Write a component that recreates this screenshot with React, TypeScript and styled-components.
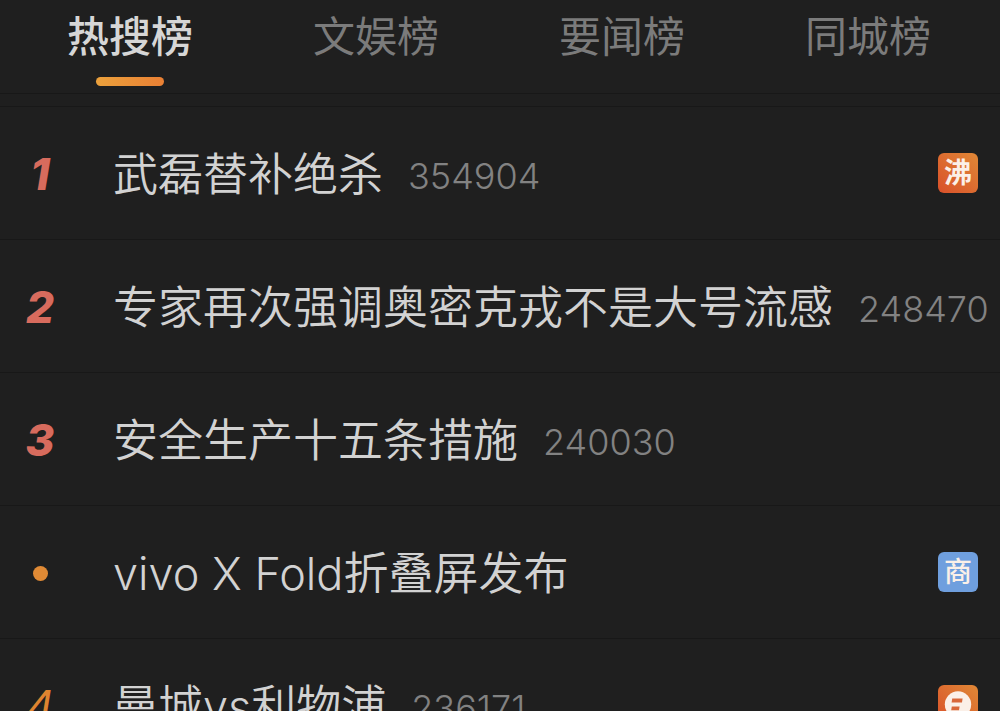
import React, { useState } from "react";
import styled, { createGlobalStyle, css } from "styled-components";

const Global = createGlobalStyle`
  * { box-sizing: border-box; }
  body {
    margin: 0;
    background: #1f1f1f;
    font-family: Inter, "Noto Sans CJK SC", sans-serif;
  }
`;

const Page = styled.main`
  display: flex;
  flex-direction: column;
  height: 100vh;
  overflow: hidden;
  background: #1f1f1f;
  color: #d2d2d2;
`;

const Tabs = styled.nav`
  display: grid;
  grid-template-columns: repeat(4, 1fr);
  flex: none;
  height: 94px;
  padding: 0 9px 0 7px;
  border-bottom: 1px solid #181818;
`;

const Tab = styled.button<{ $active: boolean }>`
  display: flex;
  flex-direction: column;
  align-items: center;
  gap: 8px;
  padding: 5px 0 0;
  border: 0;
  background: none;
  color: ${(p) => (p.$active ? "#d6d6d6" : "#7b7b7b")};
  font-family: inherit;
  font-size: 42px;
  font-weight: ${(p) => (p.$active ? 500 : 400)};
  line-height: 64px;
  cursor: pointer;

  &::after {
    content: "";
    width: 68px;
    height: 9px;
    border-radius: 5px;
    background: ${(p) => (p.$active ? "linear-gradient(90deg, #eba13c, #ea8034)" : "none")};
  }
`;

const List = styled.ol`
  flex: none;
  margin: 12px 0 0;
  padding: 0;
  list-style: none;
  border-top: 1px solid #181818;
`;

const Row = styled.li`
  display: flex;
  align-items: center;
  height: 133px;
  padding-right: 22px;
  border-bottom: 1px solid #181818;
`;

const Rank = styled.span<{ $top: boolean }>`
  display: flex;
  justify-content: center;
  flex: none;
  width: 80px;
  margin-right: 33px;
  padding-top: 2px;
  font-size: 44px;
  font-style: italic;
  line-height: 64px;
  ${(p) =>
    p.$top
      ? css`
          color: #d76b5d;
          font-weight: 800;
        `
      : css`
          color: #de8430;
          font-weight: 400;
        `}
`;

const Dot = styled.span`
  width: 15px;
  height: 15px;
  border-radius: 50%;
  background: #e08a35;
`;

const Topic = styled.a`
  display: flex;
  align-items: center;
  gap: 25px;
  flex: none;
  padding-top: 3px;
  color: inherit;
  text-decoration: none;
  white-space: nowrap;
`;

const Title = styled.span`
  font-size: 45px;
  font-weight: 350;
  line-height: 64px;
`;

const Count = styled.span`
  padding-top: 2px;
  color: #828282;
  font-size: 36px;
  font-weight: 300;
  line-height: 64px;
`;

const Badge = styled.span<{ $tone: "hot" | "ad" }>`
  display: flex;
  align-items: center;
  justify-content: center;
  flex: none;
  width: 40px;
  height: 40px;
  margin-left: auto;
  border-radius: 6px;
  color: #fbf0e8;
  font-size: 28px;
  line-height: 40px;
  ${(p) =>
    p.$tone === "hot"
      ? css`
          background: linear-gradient(45deg, #d9502a, #e08836);
          font-weight: 700;
        `
      : css`
          background: #6f9fde;
          font-weight: 500;
        `}
`;

const FaceIcon = () => (
  <svg width="28" height="28" viewBox="0 0 28 28" aria-hidden="true">
    <circle cx="14" cy="13.5" r="13.2" fill="#fbf0e8" />
    <path d="M8.2 7.6 H18.6 L18 11.4 H7.6 Z" fill="#d9683a" />
    <path d="M7.8 15.4 H15.6 L15 19.2 H7.2 Z" fill="#d9683a" />
  </svg>
);

type Item = {
  rank?: number;
  title: string;
  count?: string;
  badge?: { tone: "hot" | "ad"; content: React.ReactNode };
};

const tabs = ["热搜榜", "文娱榜", "要闻榜", "同城榜"];

const items: Item[] = [
  { rank: 1, title: "武磊替补绝杀", count: "354904", badge: { tone: "hot", content: "沸" } },
  { rank: 2, title: "专家再次强调奥密克戎不是大号流感", count: "248470" },
  { rank: 3, title: "安全生产十五条措施", count: "240030" },
  { title: "vivo X Fold折叠屏发布", badge: { tone: "ad", content: "商" } },
  { rank: 4, title: "曼城vs利物浦", count: "236171", badge: { tone: "hot", content: <FaceIcon /> } },
];

export default function App() {
  const [active, setActive] = useState(0);
  return (
    <Page>
      <Global />
      <Tabs>
        {tabs.map((name, i) => (
          <Tab key={name} type="button" $active={i === active} onClick={() => setActive(i)}>
            {name}
          </Tab>
        ))}
      </Tabs>
      <List>
        {items.map((item) => (
          <Row key={item.title}>
            <Rank $top={!!item.rank && item.rank <= 3}>{item.rank ?? <Dot />}</Rank>
            <Topic href="#">
              <Title>{item.title}</Title>
              {item.count && <Count>{item.count}</Count>}
            </Topic>
            {item.badge && <Badge $tone={item.badge.tone}>{item.badge.content}</Badge>}
          </Row>
        ))}
      </List>
    </Page>
  );
}
